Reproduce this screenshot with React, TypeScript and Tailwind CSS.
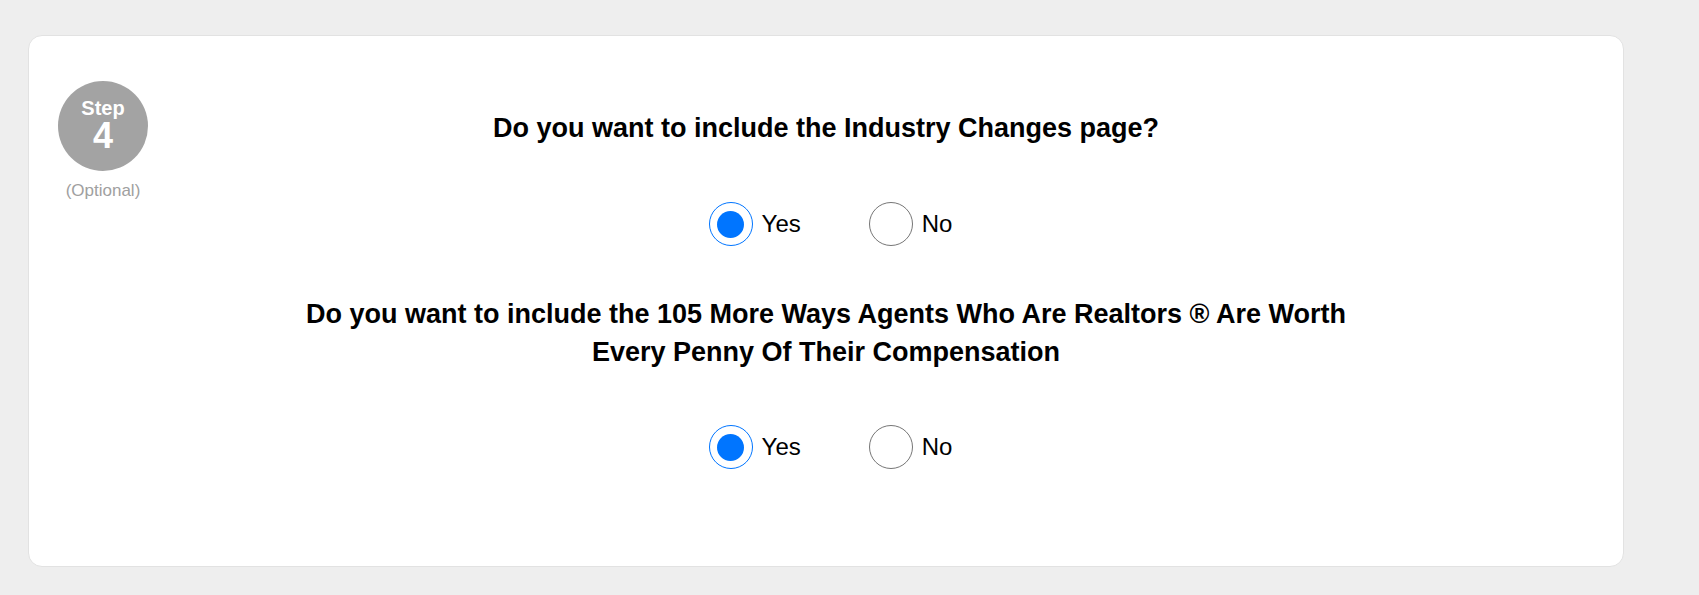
import React from "react";

function Radio({ checked, label }: { checked: boolean; label: string }) {
  return (
    <label className="flex items-center gap-[9px] cursor-pointer">
      {checked ? (
        <span className="w-[44px] h-[44px] rounded-full border-[1.5px] border-[#0075ff] flex items-center justify-center">
          <span className="w-[27px] h-[27px] rounded-full bg-[#0075ff]" />
        </span>
      ) : (
        <span className="w-[44px] h-[44px] rounded-full border-[1.5px] border-[#767676] bg-white" />
      )}
      <span className="text-[24px] leading-none text-black">{label}</span>
    </label>
  );
}

function RadioRow() {
  return (
    <div className="flex justify-center">
      <div className="flex items-center gap-[68px] ml-[9px]">
        <Radio checked label="Yes" />
        <Radio checked={false} label="No" />
      </div>
    </div>
  );
}

export default function App() {
  return (
    <div
      className="min-h-screen bg-[#eeeeee] pt-[35px] pl-[28px]"
      style={{ fontFamily: '"Liberation Sans", Arial, sans-serif' }}
    >
      <div className="w-[1596px] h-[532px] bg-white border border-[#e2e2e2] rounded-[14px] grid grid-cols-[150px_1fr_150px]">
        <div className="pl-[29px] pt-[45px]">
          <div className="w-[90px] flex flex-col items-center">
            <div className="w-[90px] h-[90px] rounded-full bg-[#a3a3a3] flex flex-col items-center justify-center text-white font-bold">
              <span className="text-[20px] leading-[20px]">Step</span>
              <span className="text-[36px] leading-[36px]">4</span>
            </div>
            <span className="mt-[10px] text-[17px] leading-[20px] text-[#a0a0a0]">(Optional)</span>
          </div>
        </div>
        <div className="pt-[73px] flex flex-col">
          <h2 className="text-center font-bold text-[27px] leading-[38px] text-black">
            Do you want to include the Industry Changes page?
          </h2>
          <div className="mt-[55px]">
            <RadioRow />
          </div>
          <h2 className="mt-[49px] mx-auto max-w-[1090px] text-center font-bold text-[27px] leading-[38px] text-black">
            Do you want to include the 105 More Ways Agents Who Are Realtors ® Are Worth Every Penny Of Their Compensation
          </h2>
          <div className="mt-[54px]">
            <RadioRow />
          </div>
        </div>
        <div />
      </div>
    </div>
  );
}
